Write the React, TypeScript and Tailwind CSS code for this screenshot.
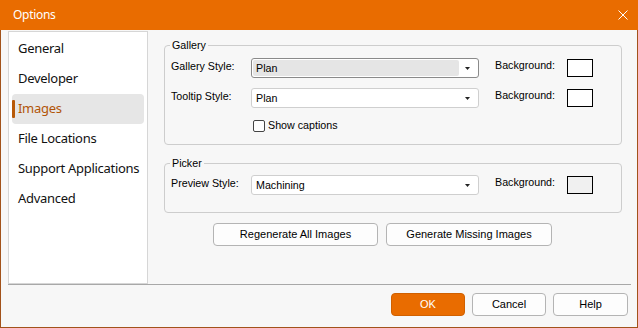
import React from 'react';

const navItems = ['General', 'Developer', 'Images', 'File Locations', 'Support Applications', 'Advanced'];

const formFont = { fontFamily: '"Liberation Sans", Arial, sans-serif' };

const Arrow = () => (
  <svg width="5" height="3" viewBox="0 0 5 3" className="shrink-0">
    <path d="M0 0 H5 L2.5 3 Z" fill="#222" />
  </svg>
);

const Combo = ({ value, focused = false }: { value: string; focused?: boolean }) => (
  <div
    className={`w-[228px] h-[20px] rounded-[3px] border bg-white flex items-center ${
      focused ? 'border-[#8a8a8a] p-[1px]' : 'border-[#cfcfcf] px-[1px]'
    }`}
  >
    <div
      className={`flex-1 h-full flex items-center pl-[3px] rounded-[2px] ${focused ? 'bg-[#e5e5e5]' : ''}`}
    >
      {value}
    </div>
    <div className="w-[18px] flex items-center justify-center pr-[1px]">
      <Arrow />
    </div>
  </div>
);

const ColorBox = ({ fill }: { fill: string }) => (
  <div className={`w-[26px] h-[18px] mt-[1px] border border-black ${fill}`} />
);

const FieldRow = ({ label, value, focused, box }: { label: string; value: string; focused?: boolean; box: string }) => (
  <div className="flex items-start">
    <div className="w-[80px] pt-[2px] leading-[13px]">{label}</div>
    <Combo value={value} focused={focused} />
    <div className="ml-[16px] w-[72px] pt-[1px] leading-[13px]">Background:</div>
    <ColorBox fill={box} />
  </div>
);

const Group = ({ title, className, children }: { title: string; className: string; children: React.ReactNode }) => (
  <div className={`relative ml-[16px] w-[458px] border border-[#cdcdcd] rounded-[4px] pl-[6px] ${className}`}>
    <span className="absolute -top-[8px] left-[5px] bg-[#f7f7f7] px-[2px] leading-[14px]">{title}</span>
    {children}
  </div>
);

const DlgButton = ({ label, primary = false, width }: { label: string; primary?: boolean; width: string }) => (
  <button
    className={`h-[23px] ${width} rounded-[4px] border text-[11px] ${
      primary ? 'bg-[#e96c00] border-[#d06000] text-white' : 'bg-[#fdfdfd] border-[#b4b4b4] text-black'
    }`}
    style={formFont}
  >
    {label}
  </button>
);

export default function App() {
  return (
    <div className="w-[638px] h-[328px] flex flex-col border-x border-b border-[#a2521a] bg-[#f7f7f7]">
      {/* title bar */}
      <div className="h-[30px] -mx-px bg-[#e96c00] flex items-center justify-between pl-[13px] pr-[10px] shrink-0">
        <span
          className="text-white text-[12px] tracking-[-0.3px]"
          style={{ fontFamily: '"Noto Sans", sans-serif' }}
        >
          Options
        </span>
        <svg width="10" height="10" viewBox="0 0 10 10">
          <path d="M0.5 0.5 L9.5 9.5 M9.5 0.5 L0.5 9.5" stroke="#fff" strokeWidth="1" />
        </svg>
      </div>

      <div className="flex-1 flex flex-col pl-[7px]">
        <div className="flex mt-[1px] h-[253px]">
          {/* nav list */}
          <div
            className="w-[140px] h-full bg-white border border-[#d6d6d6] pt-[2px] px-[3px]"
            style={{ fontFamily: '"Noto Sans", sans-serif' }}
          >
            {navItems.map((item) => {
              const active = item === 'Images';
              return (
                <div
                  key={item}
                  className={`relative h-[30px] flex items-center pl-[6px] text-[13px] tracking-[-0.3px] rounded-[4px] ${
                    active ? 'bg-[#e6e6e6] text-[#b25508]' : 'text-[#111]'
                  }`}
                >
                  {active && <span className="absolute left-0 top-[6px] w-[3px] h-[18px] rounded-[1px] bg-[#b85a08]" />}
                  {item}
                </div>
              );
            })}
          </div>

          {/* content */}
          <div className="flex-1 flex flex-col text-[10.7px] text-black" style={formFont}>
            <Group title="Gallery" className="mt-[14px] h-[100px] pt-[12px]">
              <FieldRow label="Gallery Style:" value="Plan" focused box="bg-white" />
              <div className="mt-[10px]">
                <FieldRow label="Tooltip Style:" value="Plan" box="bg-white" />
              </div>
              <label className="mt-[11px] ml-[82px] flex items-center gap-[3px] leading-[13px]">
                <span className="w-[12px] h-[12px] border border-[#444] rounded-[2px] bg-white" />
                Show captions
              </label>
            </Group>

            <Group title="Picker" className="mt-[18px] h-[50px] pt-[11px]">
              <FieldRow label="Preview Style:" value="Machining" box="bg-[#f0f0f0]" />
            </Group>

            <div className="flex gap-[8px] ml-[65px] mt-[10px]">
              <DlgButton label="Regenerate All Images" width="w-[165px]" />
              <DlgButton label="Generate Missing Images" width="w-[166px]" />
            </div>
          </div>
        </div>

        <div className="h-px bg-[#a8a8a8] mr-[6px]" />

        <div className="flex justify-end gap-[7px] pr-[9px] mt-[8px]">
          <DlgButton label="OK" primary width="w-[74px]" />
          <DlgButton label="Cancel" width="w-[74px]" />
          <DlgButton label="Help" width="w-[75px]" />
        </div>
      </div>
    </div>
  );
}
